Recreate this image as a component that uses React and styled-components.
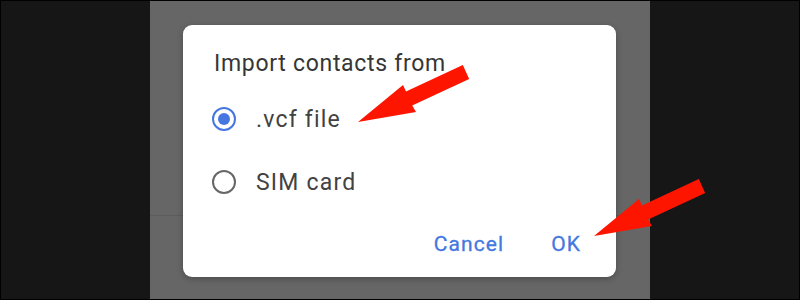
import styled, { createGlobalStyle } from "styled-components";

const Global = createGlobalStyle`
  html, body {
    margin: 0;
    padding: 0;
    background: #161616;
  }
  * {
    box-sizing: border-box;
  }
`;

const Page = styled.div`
  position: relative;
  width: 800px;
  height: 300px;
  border: 1px solid #000;
  display: flex;
  background: #161616;
  font-family: Roboto, "Liberation Sans", sans-serif;
  overflow: hidden;
`;

const Side = styled.div`
  width: ${(p) => p.w}px;
  flex: ${(p) => (p.w ? "none" : "1")};
  background: #161616;
`;

const Screen = styled.div`
  width: 500px;
  flex: none;
  padding: 24px 34px 0 33px;
  background: linear-gradient(
    to bottom,
    #666 0,
    #666 214px,
    #5d5d5d 214px,
    #5d5d5d 215px,
    #666 215px
  );
`;

const Dialog = styled.div`
  width: 433px;
  background: #fff;
  border-radius: 9px;
  box-shadow: 0 2px 6px rgba(0, 0, 0, 0.25);
  padding: 25px 0 19px 29px;
  display: flex;
  flex-direction: column;
`;

const Title = styled.div`
  font-size: 23px;
  line-height: 28px;
  letter-spacing: 0.7px;
  color: #363636;
  margin: 0 0 10px 2px;
`;

const Option = styled.div`
  height: 63px;
  display: flex;
  align-items: center;
  gap: 20px;
`;

const Radio = styled.span`
  width: 24px;
  height: 24px;
  border-radius: 50%;
  border: 2.5px solid ${(p) => (p.checked ? "#4677e0" : "#676767")};
  display: flex;
  align-items: center;
  justify-content: center;
  margin-top: -2px;

  &::after {
    content: "";
    width: 12px;
    height: 12px;
    border-radius: 50%;
    background: #4677e0;
    display: ${(p) => (p.checked ? "block" : "none")};
  }
`;

const Label = styled.span`
  font-size: 23px;
  line-height: 28px;
  letter-spacing: 1.2px;
  color: #424242;
`;

const Actions = styled.div`
  margin-top: 16px;
  display: flex;
  justify-content: flex-end;
  gap: 47px;
  padding-right: 35px;
`;

const Action = styled.span`
  font-size: 21px;
  line-height: 28px;
  font-weight: 400;
  letter-spacing: 1.1px;
  color: #4577e0;
  -webkit-text-stroke: 0.3px #4577e0;
`;

const Overlay = styled.svg`
  position: absolute;
  left: -1px;
  top: -1px;
  pointer-events: none;
`;

const ARROW =
  "358,122 403,85 406,91.6 462.8,65.1 469.2,78.9 412.2,105.4 416,112";

export default function App() {
  return (
    <>
      <Global />
      <Page>
        <Side w={149} />
        <Screen>
          <Dialog>
            <Title>Import contacts from</Title>
            <Option>
              <Radio checked />
              <Label>.vcf file</Label>
            </Option>
            <Option>
              <Radio />
              <Label>SIM card</Label>
            </Option>
            <Actions>
              <Action>Cancel</Action>
              <Action>OK</Action>
            </Actions>
          </Dialog>
        </Screen>
        <Side />
        <Overlay width="800" height="300" viewBox="0 0 800 300">
          <polygon points={ARROW} fill="#fe1500" />
          <polygon
            points={ARROW}
            fill="#fe1500"
            transform="translate(236 114)"
          />
        </Overlay>
      </Page>
    </>
  );
}
